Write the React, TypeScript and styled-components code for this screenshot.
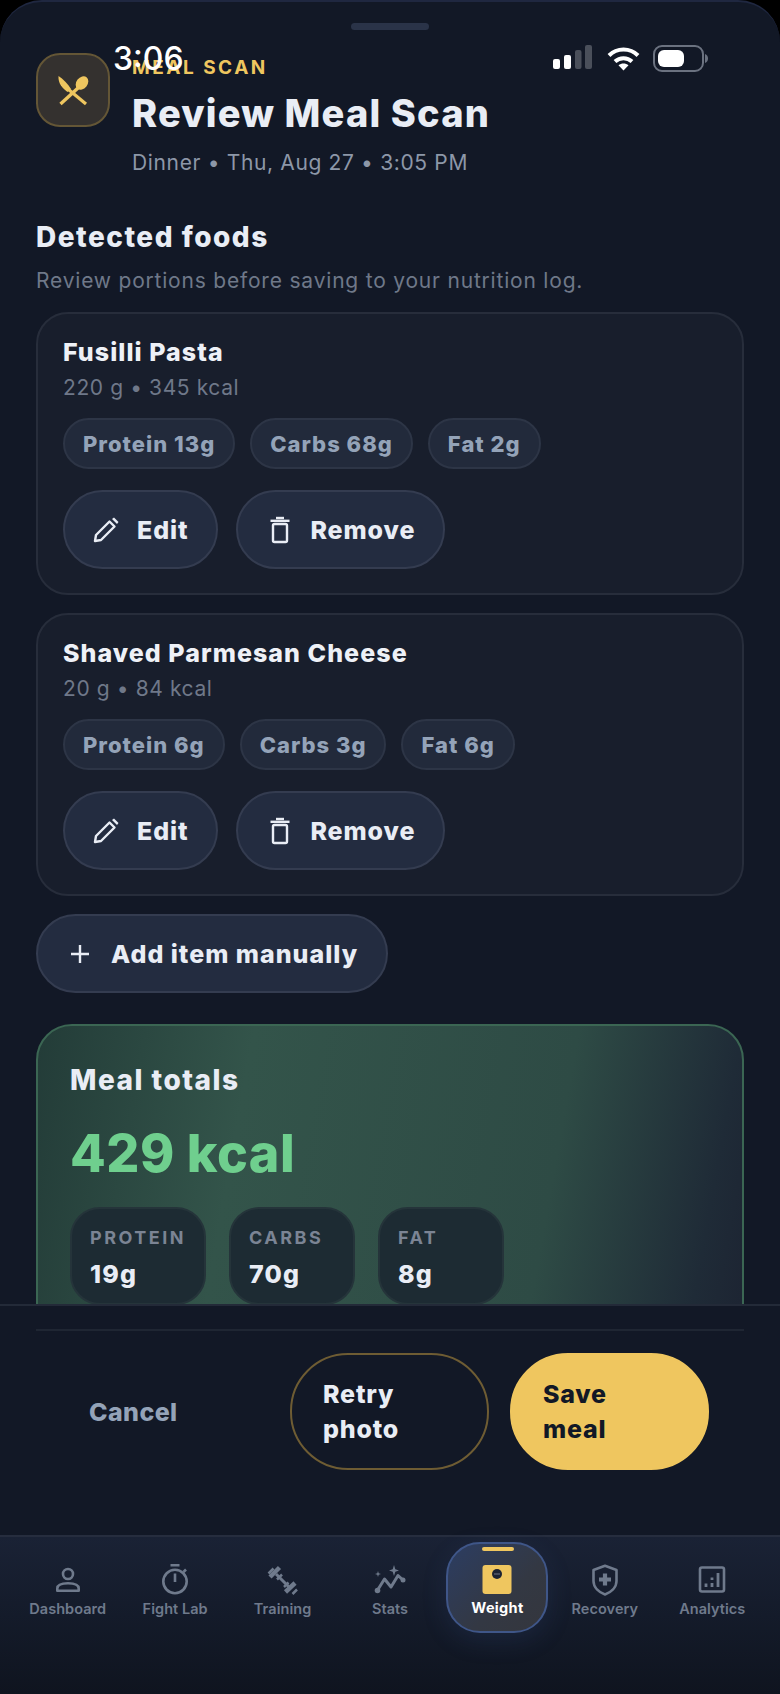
import React from 'react'
import styled, { createGlobalStyle } from 'styled-components'

const GlobalStyle = createGlobalStyle`
  html, body { margin: 0; padding: 0; background: #000; }
  * { box-sizing: border-box; }
  body { font-family: Inter, "Noto Sans", sans-serif; }
`

const Sheet = styled.div`
  position: relative;
  width: 780px;
  height: 1694px;
  display: flex;
  flex-direction: column;
  overflow: hidden;
  background: #121826;
  border-top: 2px solid #1f2740;
  border-radius: 42px 42px 0 0;
`

const Handle = styled.div`
  position: absolute;
  top: 21px;
  left: 351px;
  width: 78px;
  height: 7px;
  border-radius: 4px;
  background: #2a3348;
`

const StatusTime = styled.div`
  position: absolute;
  z-index: 3;
  top: 38px;
  left: 113px;
  font-size: 32px;
  line-height: 38px;
  font-weight: 500;
  color: #fff;
`

const StatusIcons = styled.div`
  position: absolute;
  z-index: 3;
  top: 43px;
  left: 553px;
  display: flex;
  align-items: flex-end;
  gap: 14px;
`

const Main = styled.main`
  flex: 1;
  min-height: 0;
  overflow: hidden;
  padding: 51px 36px 0;
`

const Header = styled.header`
  display: flex;
  gap: 22px;
`

const HeaderIcon = styled.div`
  width: 74px;
  height: 74px;
  flex: none;
  display: flex;
  align-items: center;
  justify-content: center;
  border-radius: 24px;
  background: #34312f;
  border: 2px solid #645636;
`

const Eyebrow = styled.div`
  font-size: 19px;
  line-height: 30px;
  font-weight: 700;
  letter-spacing: 2.5px;
  color: #efc65f;
`

const Title = styled.h1`
  margin: 7px 0 0;
  font-size: 38px;
  line-height: 46px;
  font-weight: 800;
  letter-spacing: 1.15px;
  color: #e9edf5;
`

const Meta = styled.div`
  margin-top: 13px;
  font-size: 21px;
  line-height: 28px;
  letter-spacing: 0.65px;
  color: #8d97a8;
`

const SectionTitle = styled.h2`
  margin: 43px 0 0;
  font-size: 28px;
  line-height: 34px;
  font-weight: 800;
  letter-spacing: 1.5px;
  color: #e9edf5;
`

const SectionHint = styled.p`
  margin: 13px 0 17px;
  font-size: 21px;
  line-height: 28px;
  letter-spacing: 0.8px;
  color: #6f7889;
`

const FoodCard = styled.section`
  height: 283px;
  margin-bottom: 18px;
  padding: 23px 25px 0;
  border: 2px solid #272d3b;
  border-radius: 32px;
  background: #181e2c;
`

const FoodName = styled.div`
  font-size: 25px;
  line-height: 30px;
  font-weight: 800;
  letter-spacing: 1.05px;
  color: #eef1f7;
`

const FoodMeta = styled.div`
  margin-top: 8px;
  font-size: 21px;
  line-height: 26px;
  letter-spacing: 0.6px;
  color: #6f7889;
`

const ChipRow = styled.div`
  display: flex;
  gap: 15px;
  margin-top: 17px;
`

const Chip = styled.span`
  height: 51px;
  display: flex;
  align-items: center;
  padding: 0 18px;
  border: 2px solid #2d3546;
  border-radius: 26px;
  background: #222a3b;
  font-size: 22px;
  font-weight: 800;
  letter-spacing: 1px;
  color: #94a3b8;
`

const ActionRow = styled.div`
  display: flex;
  gap: 18px;
  margin-top: 21px;
`

const PillButton = styled.button`
  height: 79px;
  display: flex;
  align-items: center;
  gap: 17px;
  padding: 0 28px 0 27px;
  border: 2px solid #343c50;
  border-radius: 40px;
  background: #232c40;
  font-family: inherit;
  font-size: 25px;
  font-weight: 800;
  letter-spacing: 0.9px;
  color: #e9edf5;
`

const AddButton = styled(PillButton)`
  gap: 21px;
  padding: 0 28px 0 32px;
  letter-spacing: 1px;
`

const TotalsCard = styled.section`
  height: 400px;
  margin-top: 31px;
  padding: 37px 32px 0;
  border: 2px solid #3b6653;
  border-radius: 36px;
  background: linear-gradient(100deg, #233c38 0%, #33544a 28%, #2e4b45 70%, #1f2b37 91%, #1c2231 100%);
`

const TotalsTitle = styled.div`
  font-size: 28px;
  line-height: 34px;
  font-weight: 800;
  letter-spacing: 1.5px;
  color: #e9edf5;
`

const TotalsKcal = styled.div`
  margin-top: 27px;
  font-size: 52px;
  line-height: 60px;
  font-weight: 800;
  letter-spacing: 0.5px;
  color: #6fcf8e;
`

const TileRow = styled.div`
  display: flex;
  gap: 23px;
  margin-top: 23px;
`

const Tile = styled.div`
  height: 98px;
  min-width: 126px;
  padding: 17px 18px 0;
  border: 2px solid #25343a;
  border-radius: 30px;
  background: #1d2b33;
`

const TileLabel = styled.div`
  font-size: 18px;
  line-height: 24px;
  font-weight: 700;
  letter-spacing: 2.5px;
  color: #7b8494;
`

const TileValue = styled.div`
  margin-top: 8px;
  font-size: 25px;
  line-height: 32px;
  font-weight: 800;
  letter-spacing: 1.2px;
  color: #e9edf5;
`

const Footer = styled.div`
  height: 231px;
  flex: none;
  padding: 23px 36px 0;
  background: #121826;
  border-top: 2px solid #232a38;
`

const Divider = styled.div`
  height: 2px;
  background: #1f2633;
`

const FooterActions = styled.div`
  display: flex;
  align-items: center;
  gap: 21px;
  margin-top: 22px;
  padding: 0 35px 0 53px;
`

const CancelButton = styled.button`
  margin-right: auto;
  padding: 0;
  border: 0;
  background: transparent;
  font-family: inherit;
  font-size: 25px;
  font-weight: 800;
  letter-spacing: 0.4px;
  color: #94a3b8;
`

const LargeButton = styled.button<{ $primary?: boolean }>`
  width: 199px;
  height: 117px;
  padding: 1px 60px 0 31px;
  border: 2px solid ${p => (p.$primary ? '#efc65f' : '#6e5c33')};
  border-radius: 58px;
  background: ${p => (p.$primary ? '#efc65f' : 'transparent')};
  font-family: inherit;
  font-size: 25px;
  line-height: 35px;
  font-weight: 800;
  letter-spacing: 0.8px;
  text-align: left;
  color: ${p => (p.$primary ? '#121826' : '#e9edf5')};
`

const Nav = styled.nav`
  height: 159px;
  flex: none;
  display: grid;
  grid-template-columns: repeat(7, 1fr);
  align-items: start;
  padding: 5px 14px 0;
  background: linear-gradient(180deg, #1a2235 0%, #141b2a 50%, #0f141f 100%);
  border-top: 2px solid #262d3e;
`

const NavItem = styled.div<{ $active?: boolean }>`
  position: relative;
  height: 91px;
  display: flex;
  flex-direction: column;
  align-items: center;
  padding-top: ${p => (p.$active ? '20px' : '22px')};
  color: ${p => (p.$active ? '#fff' : '#6f7a8c')};
  ${p =>
    p.$active &&
    `
    width: 102px;
    justify-self: center;
    border: 2px solid #3f5688;
    border-radius: 34px;
    background: linear-gradient(135deg, #2c3d62 0%, #333843 60%, #34363d 100%);
    box-shadow: 0 8px 24px rgba(60, 90, 150, 0.18);
  `}
`

const NavGlyph = styled.svg`
  width: 32px;
  height: 32px;
  flex: none;
`

const NavLabel = styled.span<{ $active?: boolean }>`
  margin-top: ${p => (p.$active ? '2px' : '3px')};
  font-size: 14.5px;
  line-height: 20px;
  font-weight: ${p => (p.$active ? 700 : 600)};
  letter-spacing: ${p => (p.$active ? '0.3px' : '0.05px')};
  white-space: nowrap;
`

const ActiveBar = styled.div`
  position: absolute;
  top: 3px;
  left: 34px;
  width: 32px;
  height: 4px;
  border-radius: 2px;
  background: #efc65f;
`

const SignalIcon = () => (
  <svg width="40" height="26" viewBox="0 0 40 26">
    <rect x="0" y="14" width="7" height="10" rx="2" fill="#fff" />
    <rect x="11" y="10" width="7" height="14" rx="2" fill="#fff" />
    <rect x="22" y="5" width="6.500" height="19" rx="2" fill="#4a4f5a" />
    <rect x="32" y="0" width="7" height="24" rx="2" fill="#4a4f5a" />
  </svg>
)

const WifiIcon = () => (
  <svg width="33" height="25" viewBox="0 0 33 25" fill="none" stroke="#fff" strokeWidth="4">
    <path d="M2 9.500C10 1.500 23 1.500 31 9.500" />
    <path d="M8 15.500C12.800 11 20.200 11 25 15.500" />
    <path d="M16.500 24.500L11.500 19.200C14.500 17 18.500 17 21.500 19.200Z" fill="#fff" stroke="none" />
  </svg>
)

const BatteryIcon = () => (
  <svg width="56" height="28" viewBox="0 0 56 28" style={{ marginLeft: -1, marginBottom: -2 }}>
    <rect x="1" y="1" width="49" height="25" rx="8" fill="none" stroke="#6b7280" strokeWidth="2" />
    <rect x="5" y="5" width="26" height="17" rx="6" fill="#fff" />
    <path d="M52 9c2 .6 3 2.400 3 4.500s-1 3.900-3 4.500z" fill="#6b7280" />
  </svg>
)

const UtensilsIcon = () => (
  <svg width="32" height="32" viewBox="0 0 32 32" fill="#efc65f" stroke="none">
    <path d="M1.500 2C6 5 11 10 14 15L10.500 18C5.500 14 1 10 1.500 2Z" />
    <path d="M11.500 15.500L29 30" stroke="#efc65f" strokeWidth="3.200" />
    <ellipse cx="25" cy="9" rx="5.600" ry="7.400" transform="rotate(38 25 9)" />
    <path d="M21 14L3.500 30" stroke="#efc65f" strokeWidth="3.400" />
  </svg>
)

const PencilIcon = () => (
  <svg width="28" height="28" viewBox="0 0 28 28" fill="none" stroke="#e9edf5" strokeWidth="2.400" strokeLinejoin="round">
    <path d="M3 25L4 19L17.500 5.500L22.500 10.500L9 24Z" />
    <path d="M20 3L22 1.500L26.500 6L25 8Z" fill="#e9edf5" stroke="none" />
  </svg>
)

const TrashIcon = () => (
  <svg width="28" height="28" viewBox="0 0 28 28" fill="none" stroke="#e9edf5" strokeWidth="2.400" strokeLinejoin="round">
    <rect x="8" y="8" width="14" height="18" rx="1.500" />
    <path d="M5.500 4.800H24.500" />
    <path d="M11 2H19" />
  </svg>
)

const PlusIcon = () => (
  <svg width="20" height="20" viewBox="0 0 20 20" stroke="#e9edf5" strokeWidth="2.400">
    <path d="M10 1V19M1 10H19" />
  </svg>
)

const DashboardGlyph = () => (
  <NavGlyph viewBox="0 0 32 32" fill="none" stroke="currentColor" strokeWidth="2.600">
    <circle cx="16" cy="10" r="5" />
    <path d="M5.300 26.700V24.500C5.300 21.300 9.500 19.300 16 19.300S26.700 21.300 26.700 24.500V26.700Z" strokeLinejoin="round" />
  </NavGlyph>
)

const FightLabGlyph = () => (
  <NavGlyph viewBox="0 0 32 32" fill="none" stroke="currentColor" strokeWidth="2.600">
    <circle cx="16" cy="17.500" r="11.700" />
    <path d="M11.500 1.200H20.500" />
    <path d="M16 9.500V18" />
    <path d="M24.500 8L27 5.500" />
  </NavGlyph>
)

const TrainingGlyph = () => (
  <NavGlyph viewBox="0 0 32 32" fill="none" stroke="currentColor">
    <path d="M9 10L23 24" strokeWidth="3" />
    <path d="M3 13L12.500 3.500" strokeWidth="4.500" />
    <path d="M1.500 9.500L6.500 4.500M10 15.500L15 10.500" strokeWidth="2.500" />
    <path d="M18.500 28L28 19" strokeWidth="4.500" />
    <path d="M17 23L21.500 18.500M25.500 30L30 25.500" strokeWidth="2.500" />
  </NavGlyph>
)

const StatsGlyph = () => (
  <NavGlyph viewBox="0 0 32 32" fill="none" stroke="currentColor">
    <path d="M3 27L10.500 15L17 23L24 11.500L29.500 16.500" strokeWidth="3" strokeLinejoin="round" />
    <circle cx="3.500" cy="26.500" r="2.800" fill="currentColor" stroke="none" />
    <circle cx="29" cy="16" r="2.500" fill="currentColor" stroke="none" />
    <path d="M20 1L21.300 5.200L25 6.500L21.300 7.800L20 12L18.700 7.800L15 6.500L18.700 5.200Z" fill="currentColor" stroke="none" />
    <path d="M4 7L4.700 9.300L7 10L4.700 10.700L4 13L3.300 10.700L1 10L3.300 9.300Z" fill="currentColor" stroke="none" />
  </NavGlyph>
)

const WeightGlyph = () => (
  <NavGlyph viewBox="0 0 32 32">
    <rect x="1.500" y="1" width="29" height="29" rx="3" fill="#efc65f" />
    <circle cx="16" cy="10" r="5" fill="#1c2333" />
    <path d="M13.500 10H14.500M15.500 10H16.500M17.500 10H18.500" stroke="#8c93a3" strokeWidth="1.400" />
  </NavGlyph>
)

const RecoveryGlyph = () => (
  <NavGlyph viewBox="0 0 32 32" fill="none" stroke="currentColor" strokeWidth="2.600">
    <path d="M16 1.800L27.500 6V17C27.500 23.500 22 28.300 16 30.500C10 28.300 4.500 23.500 4.500 17V6Z" strokeLinejoin="round" />
    <path d="M16 9.500V21.500M10 15.500H22" strokeWidth="4.200" />
  </NavGlyph>
)

const AnalyticsGlyph = () => (
  <NavGlyph viewBox="0 0 32 32" fill="none" stroke="currentColor" strokeWidth="2.600">
    <rect x="4" y="3.500" width="24" height="24" rx="2" />
    <path d="M10 23V19.500M16 23V19M16 16V13.500M22 23V9" strokeWidth="2.800" />
  </NavGlyph>
)

type Food = { name: string; meta: string; macros: string[] }

const foods: Food[] = [
  { name: 'Fusilli Pasta', meta: '220 g • 345 kcal', macros: ['Protein 13g', 'Carbs 68g', 'Fat 2g'] },
  { name: 'Shaved Parmesan Cheese', meta: '20 g • 84 kcal', macros: ['Protein 6g', 'Carbs 3g', 'Fat 6g'] },
]

const totals = [
  { label: 'PROTEIN', value: '19g' },
  { label: 'CARBS', value: '70g' },
  { label: 'FAT', value: '8g' },
]

const navItems = [
  { label: 'Dashboard', glyph: <DashboardGlyph /> },
  { label: 'Fight Lab', glyph: <FightLabGlyph /> },
  { label: 'Training', glyph: <TrainingGlyph /> },
  { label: 'Stats', glyph: <StatsGlyph /> },
  { label: 'Weight', glyph: <WeightGlyph />, active: true },
  { label: 'Recovery', glyph: <RecoveryGlyph /> },
  { label: 'Analytics', glyph: <AnalyticsGlyph /> },
]

const App: React.FC = () => {
  return (
    <>
      <GlobalStyle />
      <Sheet>
        <Handle />
        <StatusTime>3:06</StatusTime>
        <StatusIcons>
          <SignalIcon />
          <WifiIcon />
          <BatteryIcon />
        </StatusIcons>
        <Main>
          <Header>
            <HeaderIcon>
              <UtensilsIcon />
            </HeaderIcon>
            <div>
              <Eyebrow>MEAL SCAN</Eyebrow>
              <Title>Review Meal Scan</Title>
              <Meta>Dinner • Thu, Aug 27 • 3:05 PM</Meta>
            </div>
          </Header>
          <SectionTitle>Detected foods</SectionTitle>
          <SectionHint>Review portions before saving to your nutrition log.</SectionHint>
          {foods.map(food => (
            <FoodCard key={food.name}>
              <FoodName>{food.name}</FoodName>
              <FoodMeta>{food.meta}</FoodMeta>
              <ChipRow>
                {food.macros.map(macro => (
                  <Chip key={macro}>{macro}</Chip>
                ))}
              </ChipRow>
              <ActionRow>
                <PillButton>
                  <PencilIcon />
                  Edit
                </PillButton>
                <PillButton>
                  <TrashIcon />
                  Remove
                </PillButton>
              </ActionRow>
            </FoodCard>
          ))}
          <AddButton>
            <PlusIcon />
            Add item manually
          </AddButton>
          <TotalsCard>
            <TotalsTitle>Meal totals</TotalsTitle>
            <TotalsKcal>429 kcal</TotalsKcal>
            <TileRow>
              {totals.map(total => (
                <Tile key={total.label}>
                  <TileLabel>{total.label}</TileLabel>
                  <TileValue>{total.value}</TileValue>
                </Tile>
              ))}
            </TileRow>
          </TotalsCard>
        </Main>
        <Footer>
          <Divider />
          <FooterActions>
            <CancelButton>Cancel</CancelButton>
            <LargeButton>Retry photo</LargeButton>
            <LargeButton $primary>Save meal</LargeButton>
          </FooterActions>
        </Footer>
        <Nav>
          {navItems.map(item => (
            <NavItem key={item.label} $active={item.active}>
              {item.active && <ActiveBar />}
              {item.glyph}
              <NavLabel $active={item.active}>{item.label}</NavLabel>
            </NavItem>
          ))}
        </Nav>
      </Sheet>
    </>
  )
}

export default App
